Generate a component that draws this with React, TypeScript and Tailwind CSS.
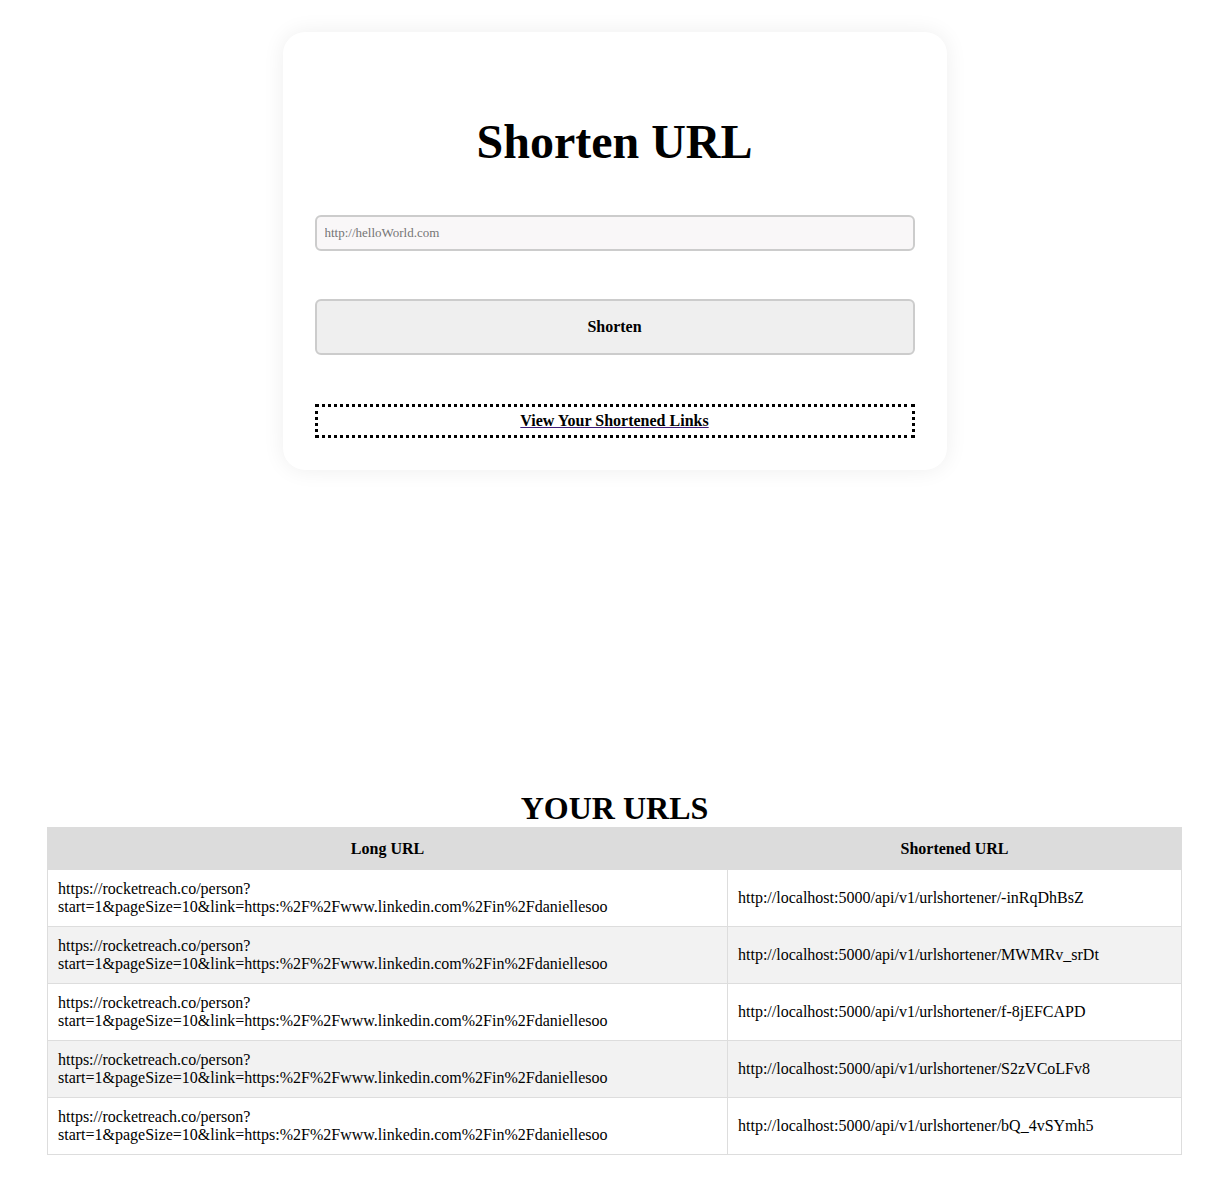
const urls = [
  { long: "https://rocketreach.co/person?start=1&pageSize=10&link=https:%2F%2Fwww.linkedin.com%2Fin%2Fdaniellesoo", short: "http://localhost:5000/api/v1/urlshortener/-inRqDhBsZ" },
  { long: "https://rocketreach.co/person?start=1&pageSize=10&link=https:%2F%2Fwww.linkedin.com%2Fin%2Fdaniellesoo", short: "http://localhost:5000/api/v1/urlshortener/MWMRv_srDt" },
  { long: "https://rocketreach.co/person?start=1&pageSize=10&link=https:%2F%2Fwww.linkedin.com%2Fin%2Fdaniellesoo", short: "http://localhost:5000/api/v1/urlshortener/f-8jEFCAPD" },
  { long: "https://rocketreach.co/person?start=1&pageSize=10&link=https:%2F%2Fwww.linkedin.com%2Fin%2Fdaniellesoo", short: "http://localhost:5000/api/v1/urlshortener/S2zVCoLFv8" },
  { long: "https://rocketreach.co/person?start=1&pageSize=10&link=https:%2F%2Fwww.linkedin.com%2Fin%2Fdaniellesoo", short: "http://localhost:5000/api/v1/urlshortener/bQ_4vSYmh5" },
];

const App = () => {
  return (
    <div className="min-h-[1190px] bg-white pl-[13px] pt-[32px] pb-[36px] font-['Liberation_Serif',serif] text-black">
      <section className="mx-auto flex w-[664px] flex-col rounded-[22px] bg-white px-[32px] pt-[82px] pb-[32px] shadow-[0_0_22px_rgba(0,0,0,0.07)]">
        <h1 className="text-center text-[48px] font-bold leading-[55px]">Shorten URL</h1>
        <input
          type="text"
          placeholder="http://helloWorld.com"
          className="mt-[46px] h-[36px] w-full rounded-[6px] border-2 border-[#cccccc] bg-[#f9f7f8] px-[8px] text-[13px] placeholder:text-[#757575] outline-none"
        />
        <button className="mt-[48px] h-[56px] w-full rounded-[6px] border-2 border-[#cccccc] bg-[#efefef] text-[16px] font-bold">
          Shorten
        </button>
        <div className="mt-[49px] flex h-[34px] items-center justify-center border-[3px] border-dotted border-black">
          <a href="#" className="text-[16px] font-bold underline decoration-[#3c1a78]">
            View Your Shortened Links
          </a>
        </div>
      </section>

      <h2 className="mt-[320px] text-center text-[32px] font-bold leading-[37px]">YOUR URLS</h2>
      <table className="mx-auto w-[1135px] table-fixed border-collapse text-[16px]">
        <thead>
          <tr className="bg-[#dcdcdc]">
            <th className="w-[680px] border border-[#dcdcdc] py-[11px] font-bold leading-[19px]">Long URL</th>
            <th className="border border-[#dcdcdc] py-[11px] font-bold leading-[19px]">Shortened URL</th>
          </tr>
        </thead>
        <tbody>
          {urls.map((u, i) => (
            <tr key={i} className={i % 2 === 1 ? "bg-[#f2f2f2]" : "bg-white"}>
              <td className="h-[57px] border border-[#dddddd] px-[10px] py-[10px] align-middle leading-[18px]">{u.long}</td>
              <td className="h-[57px] border border-[#dddddd] px-[10px] py-[10px] align-middle leading-[18px]">{u.short}</td>
            </tr>
          ))}
        </tbody>
      </table>
    </div>
  );
};

export default App;
